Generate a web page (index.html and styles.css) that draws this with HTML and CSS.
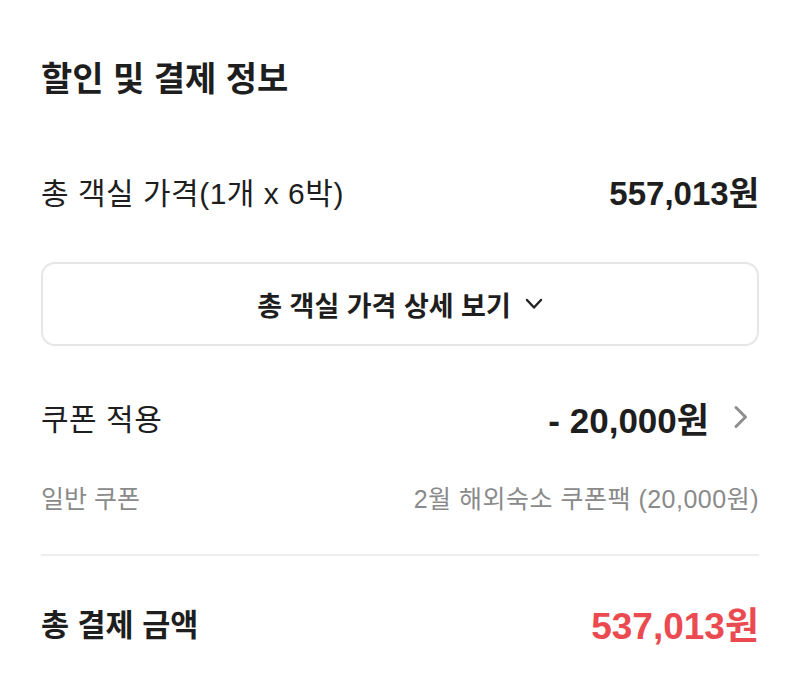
FILE: index.html
```html
<!DOCTYPE html>
<html>
<head>
  <meta charset="utf-8">
  <link rel="stylesheet" href="styles.css">
</head>
<body>
  <div class="payment">
    <h2 class="title">할인 및 결제 정보</h2>

    <div class="row row-price">
      <span class="label">총 객실 가격(1개 x 6박)</span>
      <span class="amount">557,013원</span>
    </div>

    <button class="detail-btn">
      총 객실 가격 상세 보기
      <svg width="18" height="12" viewBox="0 0 18 12"><path d="M2 2 L9 9.5 L16 2" fill="none" stroke="#222" stroke-width="2.4" stroke-linecap="round" stroke-linejoin="round"/></svg>
    </button>

    <div class="row row-coupon">
      <span class="label">쿠폰 적용</span>
      <span class="amount-wrap">
        <span class="amount discount">- 20,000원</span>
        <svg width="16" height="24" viewBox="0 0 16 24"><path d="M3 2.5 L12.5 12 L3 21.5" fill="none" stroke="#8e8e8e" stroke-width="3" stroke-linecap="round" stroke-linejoin="round"/></svg>
      </span>
    </div>

    <div class="row row-sub">
      <span>일반 쿠폰</span>
      <span class="coupon-name">2월 해외숙소 쿠폰팩 (20,000원)</span>
    </div>

    <div class="divider"></div>

    <div class="row row-total">
      <span class="label">총 결제 금액</span>
      <span class="amount total">537,013원</span>
    </div>
  </div>
</body>
</html>
```

FILE: styles.css
```css
* {
  box-sizing: border-box;
  margin: 0;
  padding: 0;
}

body {
  background: #fff;
  font-family: 'Liberation Sans', 'Noto Sans CJK KR', sans-serif;
  color: #1e1e1e;
}

.payment {
  padding: 54px 41px 0 41px;
}

.title {
  font-size: 34px;
  font-weight: 700;
  line-height: 50px;
  color: #1e1e1e;
}

.row {
  display: flex;
  justify-content: space-between;
  align-items: center;
}

.row-price {
  margin-top: 62px;
  height: 50px;
}

.label {
  font-size: 30px;
  letter-spacing: 0.5px;
}

.amount {
  font-size: 33px;
  font-weight: 700;
}

.detail-btn {
  margin-top: 46px;
  width: 100%;
  height: 84px;
  border: 2px solid #e6e6e6;
  border-radius: 14px;
  background: #fff;
  font-family: inherit;
  font-size: 27px;
  font-weight: 700;
  color: #1e1e1e;
  display: flex;
  justify-content: center;
  align-items: center;
  gap: 14px;
}

.row-coupon {
  margin-top: 46px;
  height: 50px;
}

.amount-wrap {
  display: flex;
  align-items: center;
  gap: 24px;
  margin-right: 10px;
}

.amount.discount {
  font-size: 35px;
}

.row-sub {
  margin-top: 38px;
  height: 34px;
  font-size: 25px;
  color: #8a8a8a;
}

.coupon-name {
  letter-spacing: 0.5px;
}

.divider {
  margin-top: 40px;
  height: 2px;
  background: #eeeeee;
}

.row-total {
  margin-top: 42px;
  height: 50px;
}

.row-total .label {
  font-weight: 700;
  font-size: 30.5px;
  letter-spacing: 0;
}

.amount.total {
  color: #ea4a50;
  font-size: 37px;
}
```
